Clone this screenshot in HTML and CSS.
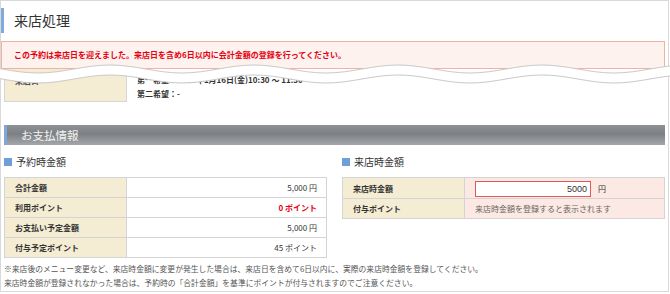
FILE: index.html
```html
<!DOCTYPE html>
<html lang="ja">
<head>
    <meta charset="UTF-8">
    <title>来店処理</title>
    <link rel="stylesheet" href="styles.css">
</head>
<body>
    <div class="page">
        <h1 class="page-title">来店処理</h1>
        <div class="alert">この予約は来店日を迎えました。来店日を含め6日以内に会計金額の登録を行ってください。</div>
        <table class="visit">
            <tr>
                <th>来店日</th>
                <td>第一希望：2015年1月16日(金)10:30 ～ 11:30<br>第二希望：-</td>
            </tr>
        </table>

        <svg class="cut" width="670" height="40" viewBox="0 0 670 40">
            <path class="cut-fill" transform="translate(0 5)" d="M -34 9 C -8 9 12 17 38 17 S 84 9 110 9 S 156 17 182 17 S 228 9 254 9 S 300 17 326 17 S 372 9 398 9 S 444 17 470 17 S 516 9 542 9 S 588 17 614 17 S 660 9 686 9"/>
            <path class="cut-line" d="M -34 9 C -8 9 12 17 38 17 S 84 9 110 9 S 156 17 182 17 S 228 9 254 9 S 300 17 326 17 S 372 9 398 9 S 444 17 470 17 S 516 9 542 9 S 588 17 614 17 S 660 9 686 9"/>
            <path class="cut-line" transform="translate(0 10)" d="M -34 9 C -8 9 12 17 38 17 S 84 9 110 9 S 156 17 182 17 S 228 9 254 9 S 300 17 326 17 S 372 9 398 9 S 444 17 470 17 S 516 9 542 9 S 588 17 614 17 S 660 9 686 9"/>
        </svg>

        <h2 class="section-title">お支払情報</h2>
        <div class="columns">
            <div class="col">
                <h3 class="sub-title">予約時金額</h3>
                <table class="info">
                    <tr><th>合計金額</th><td class="num">5,000 円</td></tr>
                    <tr><th>利用ポイント</th><td class="num point">0 ポイント</td></tr>
                    <tr><th>お支払い予定金額</th><td class="num">5,000 円</td></tr>
                    <tr><th>付与予定ポイント</th><td class="num">45 ポイント</td></tr>
                </table>
            </div>
            <div class="col">
                <h3 class="sub-title">来店時金額</h3>
                <table class="info entry">
                    <tr>
                        <th>来店時金額</th>
                        <td><input type="text" name="visit_amount" value="5000"><span class="unit">円</span></td>
                    </tr>
                    <tr>
                        <th>付与ポイント</th>
                        <td class="hint">来店時金額を登録すると表示されます</td>
                    </tr>
                </table>
            </div>
        </div>
        <p class="notes">※来店後のメニュー変更など、来店時金額に変更が発生した場合は、来店日を含めて6日以内に、実際の来店時金額を登録してください。<br>来店時金額が登録されなかった場合は、予約時の「合計金額」を基準にポイントが付与されますのでご注意ください。</p>
    </div>
</body>
</html>
```

FILE: styles.css
```css
body {
    margin: 0;
    font-family: "Noto Sans CJK JP", sans-serif;
    color: #333;
    background-color: #fff;
}
.page {
    position: relative;
    width: 669px;
    height: 292px;
    padding: 0 3px;
    border: 1px solid #d9d9d9;
    box-sizing: border-box;
}
.page-title {
    margin: 7px 0 0 -3px;
    height: 25px;
    padding-left: 10px;
    border-left: 3px solid #80aadd;
    font-size: 14px;
    font-weight: normal;
    line-height: 25px;
    color: #333;
}
.alert {
    margin: 8px 0 0 -3px;
    height: 26px;
    padding-left: 12px;
    border: 1px solid #f0b2a5;
    background-color: #fdf2ee;
    color: #e60012;
    font-size: 8px;
    font-weight: bold;
    line-height: 26px;
}
table {
    border-collapse: collapse;
}
.visit th {
    width: 101px;
    height: 27px;
    padding: 5px 10px 0;
    border: 1px solid #d6d6d6;
    border-top: none;
    background-color: #f4ecd3;
    font-size: 8px;
    line-height: 14px;
    text-align: left;
    vertical-align: top;
}
.visit td {
    padding: 4px 10px 0;
    font-size: 8px;
    line-height: 14px;
    font-weight: bold;
    vertical-align: top;
}
.cut {
    position: absolute;
    left: -1px;
    top: 55px;
}
.cut-fill {
    fill: none;
    stroke: #fff;
    stroke-width: 10;
}
.cut-line {
    fill: none;
    stroke: #c9c9c9;
    stroke-width: 1;
}
.section-title {
    margin: 23px 0 0;
    height: 20px;
    padding-left: 14px;
    border-left: 3px solid #7fa8d8;
    background: linear-gradient(#8e9195, #7c7f83 45%, #a5a8ab);
    color: #f4f4f4;
    font-size: 11.5px;
    font-weight: normal;
    line-height: 20px;
}
.columns {
    display: grid;
    grid-template-columns: 1fr 1fr;
    column-gap: 15px;
}
.sub-title {
    display: flex;
    align-items: center;
    gap: 4px;
    margin: 10px 0 8px;
    height: 14px;
    font-size: 10px;
    font-weight: normal;
    line-height: 14px;
}
.sub-title::before {
    content: "";
    width: 8px;
    height: 8px;
    background-color: #6f9fd8;
}
.info {
    width: 100%;
}
.info th,
.info td {
    height: 19px;
    padding: 0 10px;
    border: 1px solid #d4d4d4;
    font-size: 8px;
    line-height: 19px;
    box-sizing: border-box;
}
.info th {
    width: 122px;
    background-color: #f4ecd3;
    text-align: left;
}
.info td {
    background-color: #fff;
}
.info .num {
    padding-right: 9px;
    text-align: right;
}
.info .point {
    color: #e60012;
    font-weight: bold;
}
.entry td {
    background-color: #fde9e3;
}
.entry input {
    width: 116px;
    height: 16px;
    margin: 0;
    padding: 0 3px;
    border: 1px solid #e2595b;
    box-sizing: border-box;
    font-family: "Liberation Sans", sans-serif;
    font-size: 9px;
    color: #333;
    text-align: right;
    vertical-align: middle;
}
.entry .unit {
    margin-left: 7px;
    vertical-align: middle;
}
.entry .hint {
    color: #666;
}
.notes {
    margin: 4px 0 0;
    font-size: 7.8px;
    line-height: 14px;
    color: #555;
}
```
